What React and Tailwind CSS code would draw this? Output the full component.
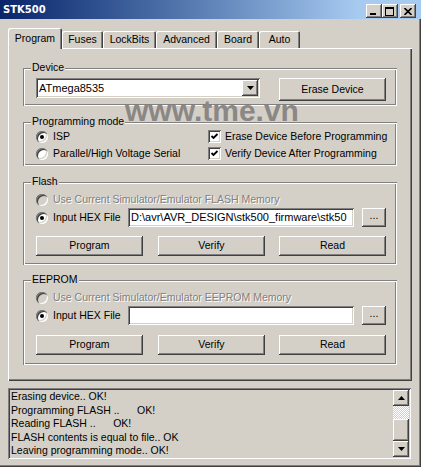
import React from "react";

// classic 3D edges, done with inset shadows so they take no layout room
const raised = "shadow-[inset_-1px_-1px_#404040,inset_1px_1px_#ffffff,inset_-2px_-2px_#808080]";
const sunken = "shadow-[inset_1px_1px_#808080,inset_-1px_-1px_#ffffff,inset_2px_2px_#404040,inset_-2px_-2px_#d4d0c8]";
const etched = "shadow-[inset_1px_1px_#808080,inset_-1px_-1px_#ffffff,inset_2px_2px_#ffffff,inset_-2px_-2px_#808080]";
const disabledText = "text-[#808080] [text-shadow:1px_1px_0_#ffffff]";

const Radio = ({ checked, disabled }) => (
  <span
    className={`w-[12px] h-[12px] rounded-full shrink-0 flex items-center justify-center ${
      disabled ? "bg-[#d4d0c8]" : "bg-white"
    } shadow-[inset_1px_1px_#808080,inset_2px_2px_#404040,inset_-1px_-1px_#ffffff,inset_-2px_-2px_#d4d0c8]`}
  >
    {checked && <span className="w-[4px] h-[4px] rounded-full bg-black" />}
  </span>
);

const Check = () => (
  <span className={`w-[13px] h-[13px] shrink-0 bg-white ${sunken} flex items-center justify-center`}>
    <svg width="9" height="9" viewBox="0 0 9 9">
      <path d="M1.5 4 L3.5 6 L7.5 2" fill="none" stroke="#000" strokeWidth="1.8" />
    </svg>
  </span>
);

const Btn = ({ children, className }) => (
  <button
    type="button"
    className={`${raised} bg-[#d4d0c8] flex items-center justify-center text-[10.5px] text-black ${className}`}
  >
    {children}
  </button>
);

const Group = ({ label, className, children }) => (
  <div className={`relative mx-[15px] ${etched} ${className}`}>
    <span className="absolute left-[8px] -top-[7px] px-[1px] bg-[#d4d0c8] leading-[13px] text-[10.5px]">
      {label}
    </span>
    {children}
  </div>
);

const Triangle = ({ up }) => (
  <svg width="7" height="4" viewBox="0 0 7 4">
    <path d={up ? "M3.5 0 L7 4 L0 4 Z" : "M0 0 L7 0 L3.5 4 Z"} fill="#000" />
  </svg>
);

const Tab = ({ label, w }) => (
  <div
    className={`h-[17px] ${w} rounded-t-[2px] flex items-center justify-center text-[10.5px] shadow-[inset_1px_1px_#ffffff,inset_-1px_0_#404040,inset_-2px_0_#808080]`}
  >
    {label}
  </div>
);

const FileRows = ({ memory, path, btnGap }) => (
  <div className="pt-[9px] pl-[13px]">
    <div className="h-[17px] flex items-center gap-[5px]">
      <Radio disabled />
      <span className={`text-[10.5px] ${disabledText}`}>
        Use Current Simulator/Emulator {memory} Memory
      </span>
    </div>
    <div className="h-[19px] flex items-center">
      <div className="w-[92px] flex items-center gap-[5px]">
        <Radio checked />
        <span className="text-[10.5px]">Input HEX File</span>
      </div>
      <div
        className={`w-[226px] h-[19px] bg-white ${sunken} flex items-center pl-[3px] overflow-hidden whitespace-nowrap text-[11px]`}
      >
        {path}
      </div>
      <Btn className="ml-[8px] w-[24px] h-[19px] pb-[3px]">...</Btn>
    </div>
    <div className={`flex ${btnGap}`}>
      <Btn className="w-[107px] h-[20px]">Program</Btn>
      <Btn className="ml-[15px] w-[107px] h-[20px]">Verify</Btn>
      <Btn className="ml-[14px] w-[107px] h-[20px]">Read</Btn>
    </div>
  </div>
);

export default function App() {
  return (
    <div className="relative w-[421px] h-[467px] bg-[#d4d0c8] overflow-hidden font-['Liberation_Sans',Arial,sans-serif] text-black shadow-[inset_-1px_-1px_#404040,inset_-2px_-2px_#808080]">
      {/* title bar */}
      <div className="h-[19px] flex items-start pl-[3px] pr-[5px] bg-linear-to-r from-[#0a246a] to-[#a6caf0] to-85%">
        <span className="mt-[3px] text-white font-bold text-[10px] leading-[13px] font-['DejaVu_Sans',sans-serif]">
          STK500
        </span>
        <div className="ml-auto mt-[4px] flex">
          <div className={`w-[16px] h-[14px] bg-[#d4d0c8] ${raised} flex items-end justify-center pb-[3px] pr-[2px]`}>
            <span className="w-[6px] h-[2px] bg-black" />
          </div>
          <div className={`w-[16px] h-[14px] bg-[#d4d0c8] ${raised} flex items-center justify-center pr-[1px]`}>
            <span className="w-[9px] h-[9px] border border-black border-t-2" />
          </div>
          <div className={`ml-[2px] w-[16px] h-[14px] bg-[#d4d0c8] ${raised} flex items-center justify-center pr-[1px]`}>
            <svg width="8" height="7" viewBox="0 0 8 7">
              <path d="M0.5 0 L7.5 7 M7.5 0 L0.5 7" stroke="#000" strokeWidth="1.6" />
            </svg>
          </div>
        </div>
      </div>

      {/* tabs */}
      <div className="mt-[9px] ml-[8px] h-[20px] flex items-end">
        <div className="relative z-10 -mb-px h-[21px] w-[54px] bg-[#d4d0c8] rounded-t-[2px] flex items-center justify-center text-[10.5px] shadow-[inset_1px_1px_#ffffff,inset_-1px_0_#404040,inset_-2px_0_#808080]">
          Program
        </div>
        <Tab label="Fuses" w="w-[41px]" />
        <Tab label="LockBits" w="w-[53px]" />
        <Tab label="Advanced" w="w-[61px]" />
        <Tab label="Board" w="w-[42px]" />
        <Tab label="Auto" w="w-[41px]" />
      </div>

      {/* tab page */}
      <div className="ml-[8px] w-[404px] h-[333px] pt-[20px] shadow-[inset_1px_1px_#ffffff,inset_-1px_-1px_#404040,inset_-2px_-2px_#808080]">
        <Group label="Device" className="h-[38px]">
          <div className="flex items-start pt-[10px] pl-[13px]">
            <div className={`w-[224px] h-[20px] bg-white ${sunken} flex items-center pl-[3px] text-[11px]`}>
              ATmega8535
              <div className={`ml-auto mr-[2px] w-[16px] h-[16px] bg-[#d4d0c8] ${raised} flex items-center justify-center`}>
                <Triangle />
              </div>
            </div>
            <Btn className="ml-[19px] w-[107px] h-[23px]">Erase Device</Btn>
          </div>
        </Group>

        <Group label="Programming mode" className="mt-[16px] h-[44px]">
          <div className="flex pt-[6px] pl-[13px]">
            <div className="w-[172px] flex flex-col">
              <div className="h-[17px] flex items-center gap-[5px]">
                <Radio checked />
                <span className="text-[10.5px]">ISP</span>
              </div>
              <div className="h-[17px] flex items-center gap-[5px]">
                <Radio />
                <span className="text-[10.5px]">Parallel/High Voltage Serial</span>
              </div>
            </div>
            <div className="flex flex-col">
              <div className="h-[17px] flex items-center gap-[4px]">
                <Check />
                <span className="text-[10.5px]">Erase Device Before Programming</span>
              </div>
              <div className="h-[17px] flex items-center gap-[4px]">
                <Check />
                <span className="text-[10.5px]">Verify Device After Programming</span>
              </div>
            </div>
          </div>
        </Group>

        <Group label="Flash" className="mt-[16px] h-[83px]">
          <FileRows memory="FLASH" path={"D:\\avr\\AVR_DESIGN\\stk500_firmware\\stk50"} btnGap="mt-[9px]" />
        </Group>

        <Group label="EEPROM" className="mt-[15px] h-[85px]">
          <FileRows memory="EEPROM" path="" btnGap="mt-[10px]" />
        </Group>
      </div>

      {/* log */}
      <div className={`mt-[7px] ml-[8px] w-[403px] h-[71px] ${sunken} flex p-[2px]`}>
        <div className="flex-1 pl-[1px] text-[10.5px] leading-[13.5px] whitespace-pre overflow-hidden">
          {"Erasing device.. OK!\nProgramming FLASH ..      OK!\nReading FLASH ..      OK!\nFLASH contents is equal to file.. OK\nLeaving programming mode.. OK!"}
        </div>
        <div className="w-[16px] flex flex-col">
          <div className={`h-[16px] bg-[#d4d0c8] ${raised} flex items-center justify-center`}>
            <Triangle up />
          </div>
          <div className="h-[13px] bg-[repeating-conic-gradient(#ffffff_0_25%,#d4d0c8_0_50%)] bg-[length:2px_2px]" />
          <div className={`h-[22px] bg-[#d4d0c8] ${raised}`} />
          <div className={`h-[16px] bg-[#d4d0c8] ${raised} flex items-center justify-center`}>
            <Triangle />
          </div>
        </div>
      </div>

      {/* watermark over the page */}
      <span className="absolute left-[125px] top-[96px] text-[30px] font-bold leading-none text-[#8a8784] pointer-events-none">
        www.tme.vn
      </span>
    </div>
  );
}
